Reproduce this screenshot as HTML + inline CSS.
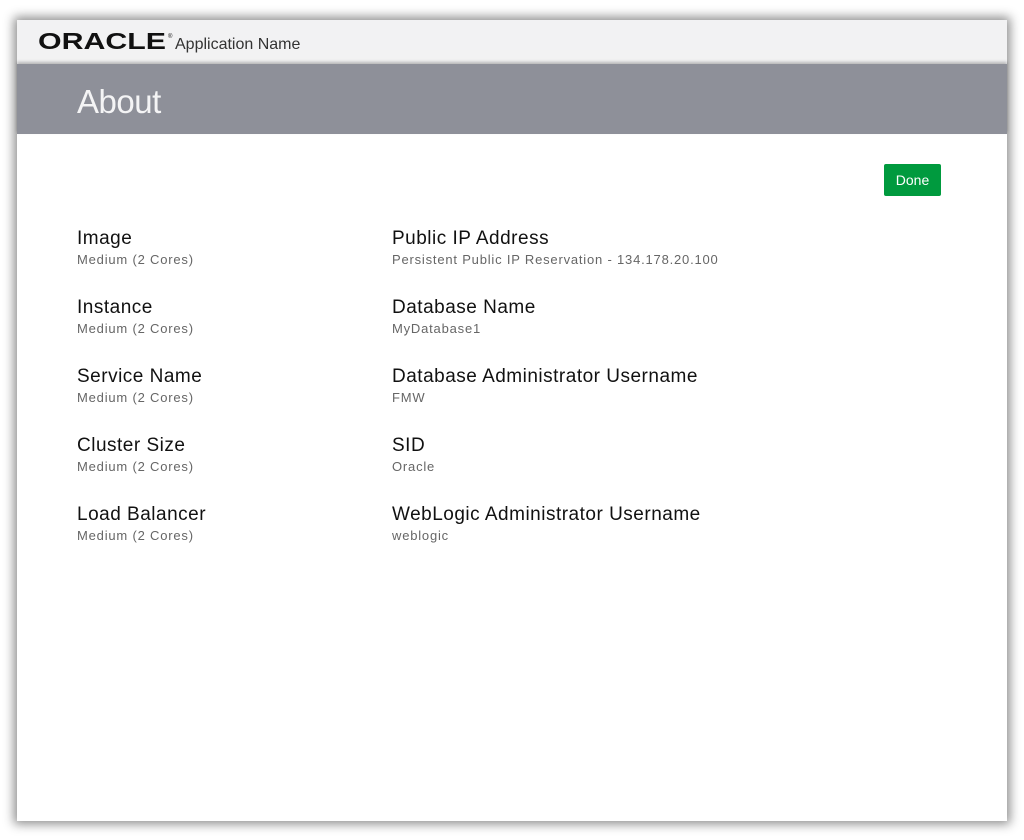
<!DOCTYPE html>
<html><head><style>
body{margin:0;width:1024px;height:840px;background:#fff;position:relative;overflow:hidden;font-family:"Liberation Sans",sans-serif}
.win{position:absolute;left:17px;top:20px;width:990px;height:801px;background:#fff;box-shadow:0 0 10px 3px rgba(0,0,0,.45)}
.hdr{position:absolute;left:0;top:0;width:990px;height:44px;background:#f2f2f3}
.bar{position:absolute;left:0;top:44px;width:990px;height:70px;background:#8e9099;box-shadow:0 -2px 3px rgba(0,0,0,.25)}
.bar span{position:absolute;left:60px;top:19px;font-size:33px;color:rgba(255,255,255,.9);letter-spacing:-.5px}
.app{position:absolute;left:158px;top:16px;font-size:16px;color:#333}
.done{position:absolute;left:867px;top:144px;width:57px;height:32px;background:#009a3e;border-radius:2px;color:#fff;font-size:14px;text-align:center;line-height:32px}
.f{position:absolute}
.f b{display:block;font-weight:normal;font-size:19px;color:#111;letter-spacing:.5px;margin-top:1px}
.f i{display:block;font-style:normal;font-size:13px;color:#666;margin-top:2px;letter-spacing:.8px}
</style></head><body>
<div class="win">
<div class="hdr">
<svg style="position:absolute;left:20px;top:10px" width="140" height="24"><text x="1" y="19" font-family="Liberation Sans" font-weight="bold" font-size="23" textLength="128" lengthAdjust="spacingAndGlyphs" fill="#111">ORACLE</text><text x="131" y="8" font-size="6" fill="#111">®</text></svg>
<div class="app">Application Name</div>
</div>
<div class="bar"><span>About</span></div>
<div class="done">Done</div>
<div class="f" style="left:60px;top:207px"><b>Image</b><i>Medium (2 Cores)</i></div>
<div class="f" style="left:60px;top:276px"><b>Instance</b><i>Medium (2 Cores)</i></div>
<div class="f" style="left:60px;top:345px"><b>Service Name</b><i>Medium (2 Cores)</i></div>
<div class="f" style="left:60px;top:414px"><b>Cluster Size</b><i>Medium (2 Cores)</i></div>
<div class="f" style="left:60px;top:483px"><b>Load Balancer</b><i>Medium (2 Cores)</i></div>
<div class="f" style="left:375px;top:207px"><b>Public IP Address</b><i>Persistent Public IP Reservation - 134.178.20.100</i></div>
<div class="f" style="left:375px;top:276px"><b>Database Name</b><i>MyDatabase1</i></div>
<div class="f" style="left:375px;top:345px"><b>Database Administrator Username</b><i>FMW</i></div>
<div class="f" style="left:375px;top:414px"><b>SID</b><i>Oracle</i></div>
<div class="f" style="left:375px;top:483px"><b>WebLogic Administrator Username</b><i>weblogic</i></div>
</div>
</body></html>
